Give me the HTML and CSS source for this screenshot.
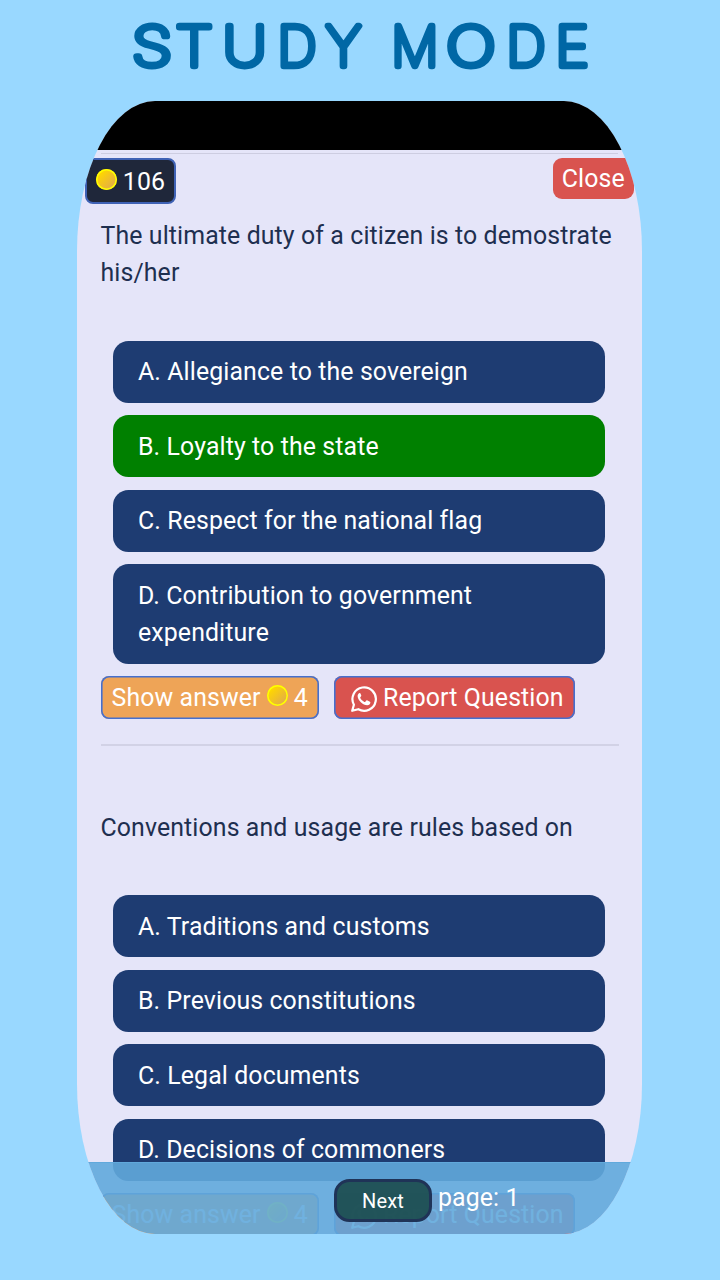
FILE: index.html
```html
<!DOCTYPE html>
<html lang="en">
<head>
<meta charset="utf-8">
<title>Study Mode</title>
<link rel="stylesheet" href="styles.css">
</head>
<body>
<svg width="0" height="0" class="defs" aria-hidden="true">
  <symbol id="whatsapp" viewBox="0 0 26 26"><path class="wa-ring" d="M1.200 24.800 2.900 18.700A11.700 11.700 0 1 1 7.300 23.200Z"/><path class="wa-phone" d="M8.700 6.900c-.900 0-2.100 1.400-2.100 3.100 0 4.200 5.400 9.300 9.600 9.300 1.800 0 3.200-1.300 3.200-2.800 0-.600-.300-.8-.9-1.100l-2-1c-.6-.3-.9-.2-1.300.300l-.9 1.100c-.3.300-.6.300-1 .1-1.700-.8-3.200-2.200-4-3.800-.2-.4-.1-.7.200-1l.6-.8c.2-.3.300-.6.100-1L9.400 7.400c-.2-.4-.3-.5-.7-.5Z"/></symbol>
</svg>
<header class="title">
  <svg class="title-art" viewBox="0 0 720 101" role="img" aria-label="STUDY MODE">
    <g class="title-text">
      <text transform="translate(132 66) scale(1.2 1)">S</text>
      <text transform="translate(175.800 66) scale(1.100 1)">T</text>
      <text transform="translate(222.800 66) scale(1.120 1)">U</text>
      <text transform="translate(277.500 66)">D</text>
      <text transform="translate(326 66)">Y</text>
      <text transform="translate(391.600 66) scale(.96 1)">M</text>
      <text transform="translate(446.200 66) scale(1.210 1)">O</text>
      <text transform="translate(506.500 66)">D</text>
      <text transform="translate(555.500 66) scale(1.040 1)">E</text>
    </g>
  </svg>
</header>
<main class="phone">
  <div class="status-bar"></div>
  <div class="top-line"></div>
  <div class="toolbar">
    <div class="coins"><span class="coin"></span>106</div>
    <button class="close">Close</button>
  </div>
  <section class="question">
    <p class="prompt">The ultimate duty of a citizen is to demostrate his/her</p>
    <div class="options">
      <div class="option">A. Allegiance to the sovereign</div>
      <div class="option correct">B. Loyalty to the state</div>
      <div class="option">C. Respect for the national flag</div>
      <div class="option">D. Contribution to government expenditure</div>
    </div>
    <div class="actions">
      <button class="btn show">Show answer<span class="coin"></span>4</button>
      <button class="btn report"><svg class="wa"><use href="#whatsapp"/></svg>Report Question</button>
    </div>
  </section>
  <div class="divider"></div>
  <section class="question">
    <p class="prompt">Conventions and usage are rules based on</p>
    <div class="options">
      <div class="option">A. Traditions and customs</div>
      <div class="option">B. Previous constitutions</div>
      <div class="option">C. Legal documents</div>
      <div class="option">D. Decisions of commoners</div>
    </div>
    <div class="actions">
      <button class="btn show">Show answer<span class="coin"></span>4</button>
      <button class="btn report"><svg class="wa"><use href="#whatsapp"/></svg>Report Question</button>
    </div>
  </section>
  <footer class="pager">
    <button class="next">Next</button>
    <span class="page">page: 1</span>
  </footer>
</main>
</body>
</html>
```
FILE: styles.css
```css
* { box-sizing: border-box; }
body {
  margin: 0;
  width: 720px;
  height: 1280px;
  overflow: hidden;
  background: #99d8ff;
  font: 24.88px/37.3px Roboto, sans-serif;
  letter-spacing: .11px;
}
button { font: inherit; letter-spacing: inherit; border: 0; margin: 0; padding: 0; }
.defs { position: absolute; }
.title { height: 101px; }
.title-art { display: block; width: 720px; height: 101px; }
.title-text {
  font-family: Inter, sans-serif;
  font-weight: 100;
  font-size: 54.500px;
  fill: #0067a5;
  stroke: #0067a5;
  stroke-width: 6.400px;
  stroke-linejoin: round;
}
.phone {
  position: relative;
  width: 565px;
  height: 1133px;
  margin-left: 77px;
  background: #e5e5f9;
  border-radius: 78px / 150px;
  overflow: hidden;
}
.status-bar { height: 49px; background: #000; }
.top-line {
  height: 4px;
  margin: 0 24px;
  border-bottom: 1px solid #cdcde1;
}
.toolbar {
  display: flex;
  justify-content: space-between;
  align-items: flex-start;
  height: 62.9px;
  padding: 4px 8px 0;
}
.coins {
  display: flex;
  align-items: center;
  width: 91px;
  height: 46px;
  padding: 1px 0 0 8.800px;
  color: #fff;
  background: #1f273a;
  border: 2px solid #3f62b5;
  border-radius: 8px;
}
.coin {
  flex: none;
  width: 21px;
  height: 21px;
  box-shadow: inset 0 0 0 1.5px #ff0;
  border-radius: 50%;
  background: linear-gradient(135deg, #ffd700 20%, #e0a850 90%);
}
.coins .coin { margin: -4px 6px 0 0; }
.close {
  width: 81.5px;
  height: 41px;
  color: #fff;
  background: #d9534f;
  border-radius: 9px;
}
.question { padding: 0 23.5px; color: #1e2f50; }
.prompt { margin: 0; }
.options {
  display: flex;
  flex-direction: column;
  gap: 12.4px;
  padding: 49.4px 13.500px 12.400px 12.500px;
}
.option {
  padding: 12.4px 25px;
  color: #fff;
  background: #1e3c72;
  border-radius: 15.5px;
}
.correct { background: #008000; }
.actions { display: flex; gap: 15px; }
.btn {
  display: flex;
  align-items: center;
  height: 43px;
  color: #fff;
  box-shadow: inset 0 0 0 1.6px #456fce;
  border-radius: 8px;
  white-space: nowrap;
}
.show { width: 218.500px; padding-left: 11px; background: #eea457; }
.show .coin { margin: -4px 6px 0; }
.report { width: 241px; padding-left: 17px; background: #d9534f; }
.wa { width: 26px; height: 26px; margin: 3px 6px 0 0; }
.wa-ring { fill: none; stroke: #fff; stroke-width: 2.2px; stroke-linejoin: round; }
.wa-phone { fill: #fff; }
.divider {
  height: 64.6px;
  margin: 24.900px 23.500px 0;
  border-top: 2px solid #d2d2e6;
}
.pager {
  position: absolute;
  left: 0;
  right: 0;
  bottom: 0;
  display: flex;
  align-items: flex-start;
  height: 72px;
  padding: 16px 0 0 257px;
  color: #fff;
  background: rgba(97, 169, 220, .9);
  border-top: 1px solid #61a9dc;
}
.next {
  width: 98px;
  height: 43px;
  color: #fff;
  font-size: 20px;
  line-height: 36px;
  background: rgba(30, 79, 82, .95);
  border: 3px solid #1f3357;
  border-radius: 15.500px;
}
.page { margin-left: 6px; }
```
